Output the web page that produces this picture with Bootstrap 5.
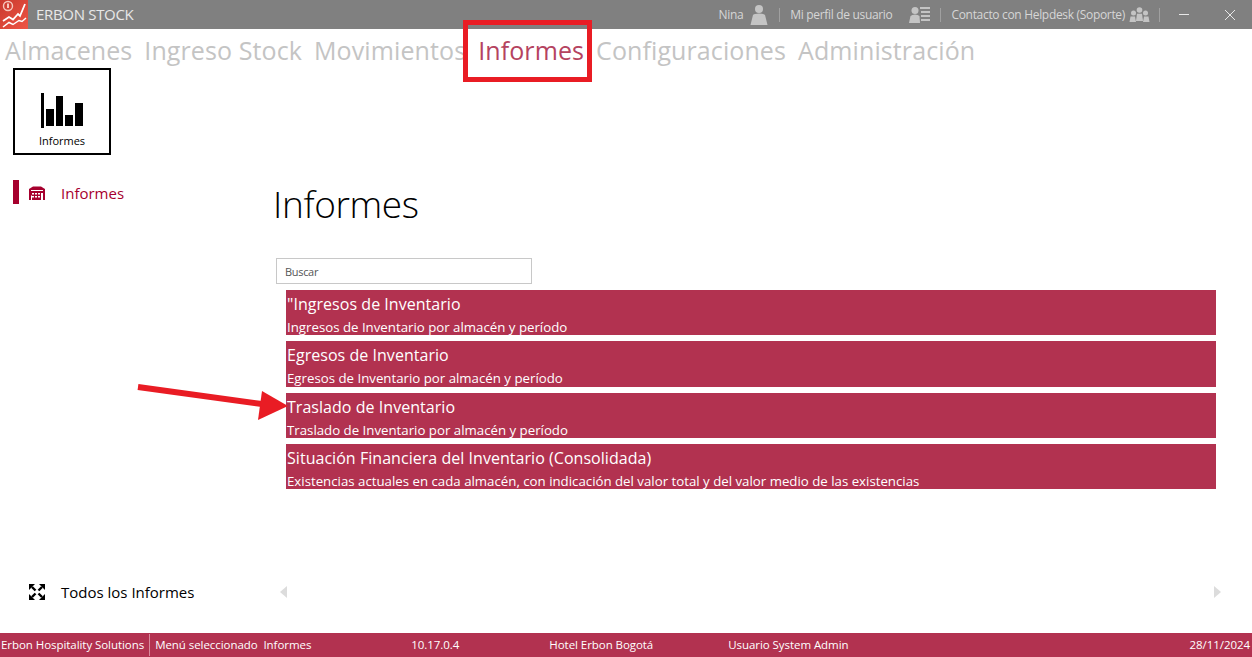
<!DOCTYPE html>
<html lang="es">
<head>
<meta charset="utf-8">
<title>Erbon Stock</title>
<link href="https://cdn.jsdelivr.net/npm/bootstrap@5.3.0/dist/css/bootstrap.min.css" rel="stylesheet">
<style>
html,body{height:100%;overflow:hidden;background:#fff}
body{font-family:"Open Sans","Noto Sans",sans-serif;color:#000;position:relative;letter-spacing:-.02em}
.app-shell{height:657px}
.title-strip{height:29px;background:#808080;color:#d6d6d6;font-size:12px}
.logo-box{width:28px;height:29px;background:linear-gradient(135deg,#c93a2e,#ee5545)}
.app-name{font-size:15px;color:#e8e8e8;margin-left:8px}
.strip-sep{width:1px;height:14px;background:#a0a0a0}
.top-menu{height:39px;gap:12px;padding-left:5px;font-size:25px;line-height:42px;color:#c4c4c4;letter-spacing:.004em}
.top-menu .sel{color:#b5435f}
.body-zone{min-height:0}
.side-col{width:260px}
.tile{width:98px;height:87px;border:2px solid #000;margin-left:13px;font-size:11px;letter-spacing:0}
.tile svg{margin-top:23px;margin-bottom:4px}
.side-item{margin-left:13px;margin-top:25px;height:24px;color:#a6002e;font-size:15px;letter-spacing:0}
.side-bar{width:6px;height:24px;background:#a6002e;margin-right:10px}
.side-txt{margin-left:16px;letter-spacing:0;padding-top:2px}
.all-reports{margin-left:29px;font-size:15px;height:20px;margin-bottom:31px}
.all-reports .side-txt{padding-top:0}
.main-col{padding-left:13px;padding-right:36px}
.page-h{font-size:37px;font-weight:300;line-height:50px;margin:111px 0 29px 0;letter-spacing:-.01em}
.search-box{width:256px;height:26px;border:1px solid #c8c8c8;margin-left:3px;padding:0 8px;font-size:11px;line-height:25px;color:#555}
.rep-list{margin:6px 0 0 13px;gap:6px}
.rep-row{height:45.33px;background:#b23250;color:#fff;padding-left:1px;overflow:hidden;white-space:nowrap;letter-spacing:0}
.rep-t{font-size:16px;line-height:21px;padding-top:4px;letter-spacing:.04px}
.rep-d{font-size:13.25px;line-height:17px;margin-top:4px}
.pager{height:20px;margin:93px -5px 0 7px}
.foot-strip{height:24px;background:#b23250;color:#fff;font-size:11.5px;white-space:nowrap;padding-left:1px;letter-spacing:-.005em}
.foot-sep{width:1px;height:22px;background:#d98a9c;margin:0 5px}
.mark-box{left:463px;top:20px;width:129px;height:62px;border:5px solid #e91c24;pointer-events:none}
.mark-arrow{left:130px;top:375px;pointer-events:none}
.gap-a{margin-left:7px}.gap-b{margin:0 10px 0 11px}.gap-c{margin-left:17px}.gap-d{margin:0 10px 0 9px}.gap-e{margin-left:4px}.gap-f{margin-left:9px}.gap-g{margin-left:19px}.gap-h{margin:0 17px 0 36px}
.f1{margin-left:100px}.f2{margin-left:90px}.f3{margin-left:75px}.f4{margin-right:2px}
</style>
</head>
<body>
<div class="app-shell d-flex flex-column">
  <div class="title-strip d-flex align-items-center">
    <div class="logo-box flex-shrink-0">
      <svg class="d-block" width="28" height="29" viewBox="0 0 28 29"><circle cx="8" cy="6" r="4.500" fill="none" stroke="#f6c8bd" stroke-width="1.400"/><rect x="7" y="3.500" width="2" height="4.500" fill="#f6c8bd"/><path d="M3 21 L9 17 L13 19.500 L18 14 L20 16 L25 4" fill="none" stroke="#fff" stroke-width="1.800"/><path d="M3 27 L9 22.500 L13 24.500 L19 20.500 L22 21.500 L26 18" fill="none" stroke="#fff" stroke-width="1.500"/></svg>
    </div>
    <span class="app-name">ERBON STOCK</span>
    <div class="ms-auto d-flex align-items-center">
      <span>Nina</span>
      <svg class="gap-a" width="18" height="22" viewBox="0 0 18 22" fill="#c4c4c4"><circle cx="9" cy="5" r="4"/><path d="M0.500 21 L3 11 Q4.500 9.500 9 9.500 Q13.500 9.500 15 11 L17.500 21Z"/></svg>
      <span class="strip-sep gap-b"></span>
      <span>Mi perfil de usuario</span>
      <svg class="gap-c" width="22" height="18" viewBox="0 0 22 18" fill="#c4c4c4"><circle cx="6" cy="4.500" r="3.500"/><path d="M0 17 L1.500 10 Q3 8.500 6 8.500 Q9 8.500 10.500 10 L11 17Z"/><rect x="11" y="1" width="10" height="2"/><rect x="12" y="5" width="9" height="2"/><rect x="12" y="9" width="9" height="2"/><rect x="12" y="13" width="9" height="2"/></svg>
      <span class="strip-sep gap-d"></span>
      <span>Contacto con Helpdesk (Soporte)</span>
      <svg class="gap-e" width="21" height="16" viewBox="0 0 21 16" fill="#c4c4c4"><circle cx="4.500" cy="6" r="2.500"/><circle cx="16.500" cy="6" r="2.500"/><circle cx="10.500" cy="3" r="2.800"/><path d="M0.500 15 L1.500 9.500 H6 L7 15Z"/><path d="M14 15 L15 9.500 H19.500 L20.500 15Z"/><path d="M7 14 L8 6.800 H13 L14 14Z"/></svg>
      <span class="strip-sep gap-f"></span>
      <svg class="gap-g" width="10" height="3" viewBox="0 0 10 3"><rect y="1" width="10" height="1" fill="#e8e8e8"/></svg>
      <svg class="gap-h" width="10" height="10" viewBox="0 0 10 10"><path d="M0 0 L10 10 M10 0 L0 10" stroke="#e8e8e8" stroke-width="1"/></svg>
    </div>
  </div>
  <div class="top-menu d-flex flex-shrink-0">
    <span>Almacenes</span><span>Ingreso Stock</span><span>Movimientos</span><span class="sel">Informes</span><span>Configuraciones</span><span>Administración</span>
  </div>
  <div class="body-zone flex-grow-1 d-flex">
    <div class="side-col flex-shrink-0 d-flex flex-column">
      <div class="tile d-flex flex-column align-items-center">
        <svg width="42" height="36" viewBox="0 0 42 36" fill="#000"><rect x="0" y="0" width="3" height="35"/><rect x="5" y="16" width="8" height="17"/><rect x="15" y="3" width="7" height="30"/><rect x="24" y="22" width="8" height="11"/><rect x="34" y="10" width="8" height="23"/></svg>
        <span>Informes</span>
      </div>
      <div class="side-item d-flex align-items-center">
        <span class="side-bar"></span>
        <svg width="16" height="15" viewBox="0 0 16 15" fill="#a6002e"><path d="M0 4 L4 1.500 H12 L16 4 V15 H0Z"/><g fill="#fff"><rect x="2" y="5" width="12" height="1"/><rect x="3" y="8" width="2" height="1.500"/><rect x="6" y="8" width="2" height="1.500"/><rect x="9" y="8" width="2" height="1.500"/><rect x="12" y="8" width="2" height="7"/><rect x="2" y="10.500" width="1" height="4.500"/><rect x="3" y="11" width="2" height="1.500"/><rect x="6" y="11" width="2" height="1.500"/><rect x="9" y="11" width="2" height="1.500"/></g></svg>
        <span class="side-txt">Informes</span>
      </div>
      <div class="all-reports d-flex align-items-center mt-auto">
        <svg width="16" height="16" viewBox="0 0 16 16" fill="#000" stroke="#000"><g stroke-width="0"><path d="M0 0 H6 L0 6Z"/><path d="M16 0 V6 L10 0Z"/><path d="M0 16 V10 L6 16Z"/><path d="M16 16 H10 L16 10Z"/></g><path stroke-width="2.400" d="M3 3 L6.500 6.500 M13 3 L9.500 6.500 M3 13 L6.500 9.500 M13 13 L9.500 9.500"/></svg>
        <span class="side-txt">Todos los Informes</span>
      </div>
    </div>
    <div class="main-col flex-grow-1 d-flex flex-column">
      <h1 class="page-h">Informes</h1>
      <div class="search-box">Buscar</div>
      <div class="rep-list d-flex flex-column">
        <div class="rep-row"><div class="rep-t">"Ingresos de Inventario</div><div class="rep-d">Ingresos de Inventario por almacén y período</div></div>
        <div class="rep-row"><div class="rep-t">Egresos de Inventario</div><div class="rep-d">Egresos de Inventario por almacén y período</div></div>
        <div class="rep-row"><div class="rep-t">Traslado de Inventario</div><div class="rep-d">Traslado de Inventario por almacén y período</div></div>
        <div class="rep-row"><div class="rep-t">Situación Financiera del Inventario (Consolidada)</div><div class="rep-d">Existencias actuales en cada almacén, con indicación del valor total y del valor medio de las existencias</div></div>
      </div>
      <div class="pager d-flex justify-content-between align-items-center">
        <svg width="7" height="12" viewBox="0 0 7 12"><path d="M7 0 V12 L0 6Z" fill="#dcdcdc"/></svg>
        <svg width="7" height="12" viewBox="0 0 7 12"><path d="M0 0 V12 L7 6Z" fill="#dcdcdc"/></svg>
      </div>
    </div>
  </div>
  <div class="foot-strip d-flex align-items-center flex-shrink-0">
    <span>Erbon Hospitality Solutions</span><span class="foot-sep"></span><span>Menú seleccionado&nbsp; Informes</span>
    <span class="f1">10.17.0.4</span>
    <span class="f2">Hotel Erbon Bogotá</span>
    <span class="f3">Usuario System Admin</span>
    <span class="ms-auto f4">28/11/2024</span>
  </div>
</div>
<div class="mark-box position-absolute"></div>
<svg class="mark-arrow position-absolute" width="160" height="50" viewBox="130 375 160 50"><path d="M138 387 L262 404" stroke="#e91c24" stroke-width="6" fill="none"/><path d="M288 406 L262 391 L258 420Z" fill="#e91c24"/></svg>
</body>
</html>
